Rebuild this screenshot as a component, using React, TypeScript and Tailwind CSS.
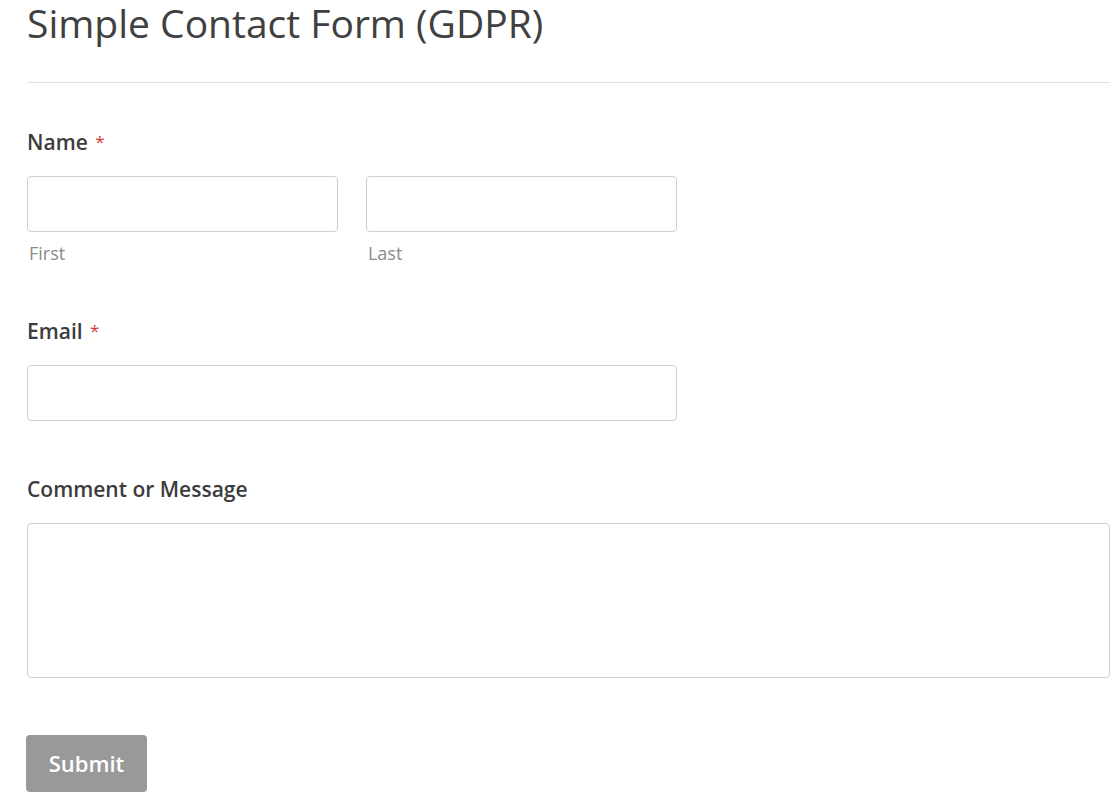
export default function App() {
  return (
    <div className="min-h-screen bg-white text-[#444] font-['Open_Sans','Noto_Sans',sans-serif]">
      <div className="pl-[27px] pr-[6px]">
        <h1 className="pt-[2px] text-[39px] leading-[42px] font-normal text-[#404040]">
          Simple Contact Form (GDPR)
        </h1>
        <div className="mt-[38px] border-t border-[#e2e2e2]" />

        <form className="pt-[47px]">
          {/* Name */}
          <div>
            <label className="block text-[21px] leading-[24px] font-semibold text-[#3c3c3c]">
              Name <span className="ml-[2px] text-[17px] text-[#d63637] font-normal align-top">*</span>
            </label>
            <div className="mt-[22px] flex gap-[28px] w-[60%]">
              <div className="flex-1">
                <input className="block w-full h-[56px] rounded-[4px] border border-[#cfcfcf] bg-white" />
                <span className="block mt-[10px] text-[18px] leading-[22px] text-[#8c8c8c] pl-[2px]">First</span>
              </div>
              <div className="flex-1">
                <input className="block w-full h-[56px] rounded-[4px] border border-[#cfcfcf] bg-white" />
                <span className="block mt-[10px] text-[18px] leading-[22px] text-[#8c8c8c] pl-[2px]">Last</span>
              </div>
            </div>
          </div>

          {/* Email */}
          <div className="mt-[55px]">
            <label className="block text-[21px] leading-[24px] font-semibold text-[#3c3c3c]">
              Email <span className="ml-[2px] text-[17px] text-[#d63637] font-normal align-top">*</span>
            </label>
            <input className="mt-[22px] block w-[60%] h-[56px] rounded-[4px] border border-[#cfcfcf] bg-white" />
          </div>

          {/* Message */}
          <div className="mt-[56px]">
            <label className="block text-[21px] leading-[24px] font-semibold text-[#3c3c3c]">
              Comment or Message
            </label>
            <textarea className="mt-[22px] block w-full h-[155px] rounded-[4px] border border-[#cfcfcf] bg-white resize-none" />
          </div>

          <button
            type="button"
            className="mt-[57px] -ml-px h-[57px] w-[121px] rounded-[4px] bg-[#999] text-white text-[22px] font-semibold"
          >
            Submit
          </button>
        </form>
      </div>
    </div>
  )
}
